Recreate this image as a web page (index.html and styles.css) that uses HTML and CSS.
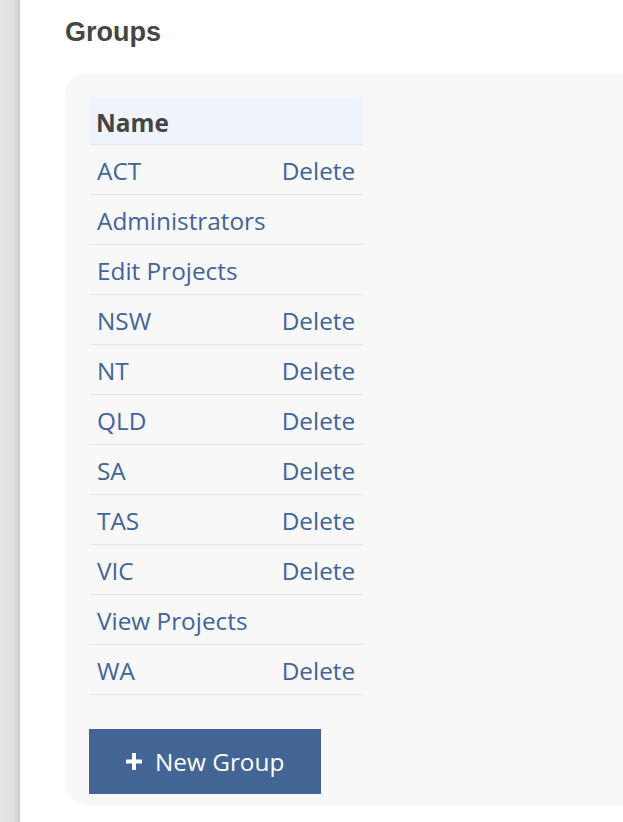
FILE: index.html
```html
<!DOCTYPE html>
<html>
<head>
<meta charset="utf-8">
<link rel="stylesheet" href="styles.css">
</head>
<body>
<div class="layout">
  <div class="sidebar"></div>
  <main class="main">
    <h1 class="title">Groups</h1>
    <section class="card">
      <table class="groups">
        <thead>
          <tr><th class="col-name">Name</th><th class="col-action"></th></tr>
        </thead>
        <tbody>
          <tr><td><a class="link">ACT</a></td><td><a class="link">Delete</a></td></tr>
          <tr><td><a class="link">Administrators</a></td><td></td></tr>
          <tr><td><a class="link">Edit Projects</a></td><td></td></tr>
          <tr><td><a class="link">NSW</a></td><td><a class="link">Delete</a></td></tr>
          <tr><td><a class="link">NT</a></td><td><a class="link">Delete</a></td></tr>
          <tr><td><a class="link">QLD</a></td><td><a class="link">Delete</a></td></tr>
          <tr><td><a class="link">SA</a></td><td><a class="link">Delete</a></td></tr>
          <tr><td><a class="link">TAS</a></td><td><a class="link">Delete</a></td></tr>
          <tr><td><a class="link">VIC</a></td><td><a class="link">Delete</a></td></tr>
          <tr><td><a class="link">View Projects</a></td><td></td></tr>
          <tr><td><a class="link">WA</a></td><td><a class="link">Delete</a></td></tr>
        </tbody>
      </table>
      <button class="btn-new" type="button">
        <svg class="plus" width="16" height="17" viewBox="0 0 16 17"><rect x="6" y="0" width="4" height="17" fill="#fff"/><rect x="0" y="6.5" width="16" height="4" fill="#fff"/></svg>
        <span>New Group</span>
      </button>
    </section>
  </main>
</div>
</body>
</html>
```

FILE: styles.css
```css
html, body {
  margin: 0;
  padding: 0;
  background: #ffffff;
}

.layout {
  display: flex;
  min-height: 100vh;
  overflow: hidden;
}

.sidebar {
  flex: 0 0 20px;
  background: linear-gradient(to right, #e4e4e4 0, #e2e2e2 13px, #d2d2d2 18px, #cccccc 20px);
}

.main {
  flex: 1;
  padding-left: 45px;
  min-width: 0;
}

.title {
  font-family: "Liberation Sans", Arial, sans-serif;
  font-weight: bold;
  font-size: 27px;
  line-height: 32px;
  color: #454545;
  margin: 16px 0 25px;
}

.card {
  background: #f8f8f8;
  border-radius: 22px 0 0 22px;
  padding: 24px 24px 11px;
}

.groups {
  border-collapse: collapse;
  font-family: "Open Sans", sans-serif;
  font-size: 24.35px;
  line-height: 36px;
}

.groups th {
  text-align: left;
  font-weight: bold;
  color: #444444;
  background: #eff4fc;
  padding: 8px 8px 3px 7px;
  border-bottom: 1px solid #e2e6ec;
}

.groups td {
  padding: 8px 8px 5px;
  border-bottom: 1px solid #e4e4e4;
  white-space: nowrap;
}

.link {
  color: #41649a;
  text-decoration: none;
}

.btn-new {
  margin-top: 34px;
  display: flex;
  align-items: center;
  gap: 13px;
  height: 65px;
  padding: 0 37px;
  border: none;
  border-radius: 0;
  background: #436596;
  color: #ffffff;
  font-family: "Open Sans", sans-serif;
  font-size: 24.35px;
  line-height: 36px;
  cursor: pointer;
}

.plus {
  display: block;
  flex: none;
}
```
